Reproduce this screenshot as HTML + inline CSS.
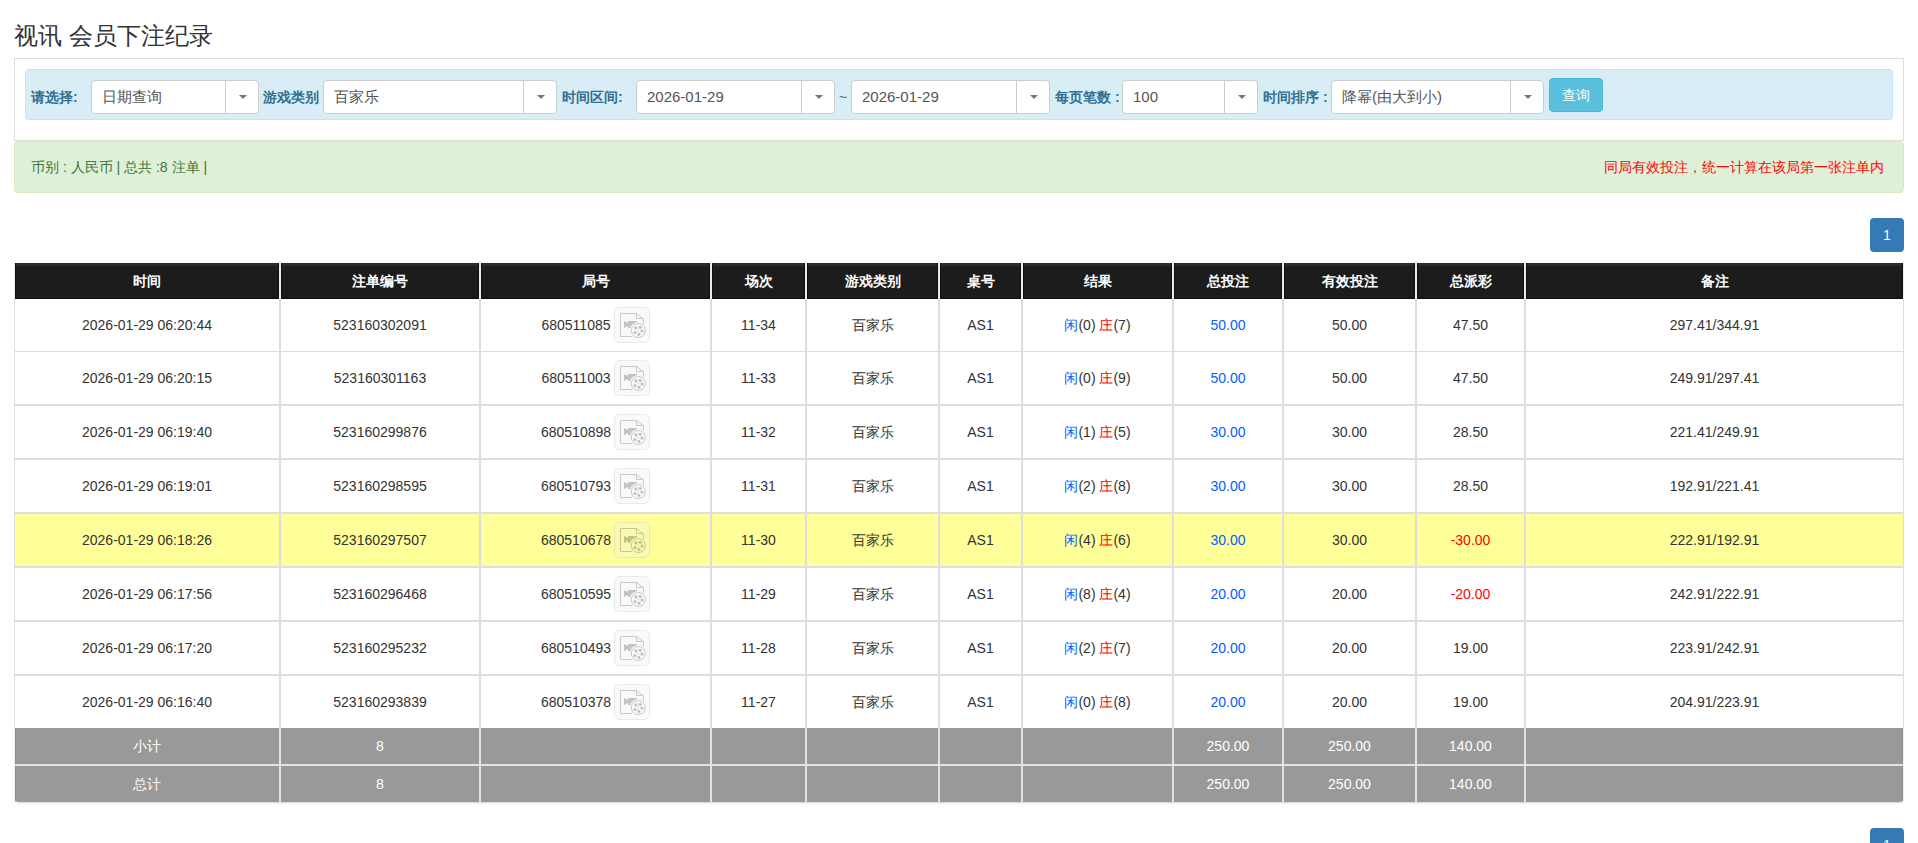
<!DOCTYPE html>
<html><head><meta charset="utf-8"><title>视讯 会员下注纪录</title>
<style>
*{box-sizing:border-box}
html,body{margin:0;padding:0;background:#fff;width:1918px;height:843px;overflow:hidden}
body{font-family:"Liberation Sans",sans-serif;color:#333;font-size:14px;position:relative}
.abs{position:absolute}
h3{position:absolute;left:14px;top:21px;margin:0;font-size:24px;font-weight:normal;line-height:30px;color:#333;white-space:nowrap}
.panel{position:absolute;left:14px;top:58px;width:1890px;height:83px;border:1px solid #ddd;background:#fff}
.info{position:absolute;left:25px;top:69px;width:1868px;height:51px;background:#d9edf7;border:1px solid #bce8f1;border-radius:4px}
.lbl{position:absolute;top:89px;line-height:16px;font-size:14px;font-weight:bold;color:#31708f;white-space:nowrap}
.sel{position:absolute;top:80px;height:34px;border:1px solid #ccc;border-radius:4px;background:#fff}
.sel .t{position:absolute;left:10px;top:0;line-height:32px;font-size:15px;color:#555;white-space:nowrap}
.sel .d{position:absolute;top:0;bottom:0;border-left:1px solid #ccc}
.sel .caret{position:absolute;top:14px;width:0;height:0;border-left:4px solid transparent;border-right:4px solid transparent;border-top:4px solid #777}
.btn{position:absolute;left:1549px;top:78px;width:54px;height:34px;background:#5bc0de;border:1px solid #46b8da;border-radius:4px;color:#fff;font-size:14px;line-height:32px;text-align:center}
.succ{position:absolute;left:14px;top:141px;width:1890px;height:52px;background:#dff0d8;border:1px solid #d6e9c6;border-radius:4px}
.succ .l{position:absolute;left:16px;top:17px;line-height:16px;color:#3c763d;font-size:14px;white-space:nowrap}
.succ .r{position:absolute;right:19px;top:17px;line-height:16px;color:#ff0000;font-size:14px;white-space:nowrap}
.pg{position:absolute;left:1870px;width:34px;height:34px;background:#337ab7;border-radius:4px;color:#fff;font-size:14px;line-height:34px;text-align:center}
.row{position:absolute;left:14px;width:1890px;display:flex}
.c{flex:none;border-left:1px solid #ddd;border-right:1px solid #ddd;display:flex;align-items:center;justify-content:center;line-height:16px;white-space:nowrap;font-size:14px}
.hd .c{background:linear-gradient(#2c2c2c 0,#2c2c2c 2px,#1c1c1c 4px,#1c1c1c 100%);border-left:1px solid #ebebeb;border-right:1px solid #ebebeb;color:#fff;font-weight:bold;box-shadow:inset 1px 0 0 #101010,inset -1px 0 0 #101010,inset 0 -1px 0 #0c0c0c}
.bd{background:#fff}
.bd.y{background:#ffff99}
.ft{background:#999}
.ft .c{color:#fff;border-left:1px solid #e2e2e2;border-right:1px solid #e2e2e2}
.ft .c:first-child{border-left:1px solid #f0f0f0;box-shadow:inset 1px 0 0 #8f8f8f}
.ft .c:last-child{border-right:1px solid #f0f0f0;box-shadow:inset -1px 0 0 #8f8f8f}
.jf{display:inline-flex;align-items:center}
.z{display:inline-block;white-space:nowrap;text-align:justify;text-align-last:justify}
.blue{color:#0060ff}
.red{color:#ff0000}
.vb{display:inline-block;vertical-align:middle;width:36px;height:36px;margin-left:3px;border:1px solid #c4c4c4;border-radius:5px;background:#eee;position:relative;opacity:.35}
.vb svg{position:absolute;left:0;top:0}
</style></head><body>
<h3><span class="z" style="width:2em">视讯</span> <span class="z" style="width:6em">会员下注纪录</span></h3>
<div class="panel"></div>
<div class="info"></div>

<div class="lbl" style="left:31px"><span class="z" style="width:3em">请选择</span>:</div>
<div class="lbl" style="left:263px"><span class="z" style="width:4em">游戏类别</span></div>
<div class="lbl" style="left:562px"><span class="z" style="width:4em">时间区间</span>:</div>
<div class="lbl" style="left:1055px"><span class="z" style="width:4em">每页笔数</span> :</div>
<div class="lbl" style="left:1263px"><span class="z" style="width:4em">时间排序</span> :</div>
<div class="lbl" style="left:839px;font-weight:normal">~</div>
<div class="sel" style="left:91px;width:168px"><div class="t"><span class="z" style="width:4em">日期查询</span></div><div class="d" style="left:133px"></div><div class="caret" style="left:147px"></div></div>
<div class="sel" style="left:323px;width:234px"><div class="t"><span class="z" style="width:3em">百家乐</span></div><div class="d" style="left:199px"></div><div class="caret" style="left:213px"></div></div>
<div class="sel" style="left:636px;width:199px"><div class="t">2026-01-29</div><div class="d" style="left:164px"></div><div class="caret" style="left:178px"></div></div>
<div class="sel" style="left:851px;width:199px"><div class="t">2026-01-29</div><div class="d" style="left:164px"></div><div class="caret" style="left:178px"></div></div>
<div class="sel" style="left:1122px;width:136px"><div class="t">100</div><div class="d" style="left:101px"></div><div class="caret" style="left:115px"></div></div>
<div class="sel" style="left:1331px;width:213px"><div class="t"><span class="z" style="width:2em">降幂</span>(<span class="z" style="width:4em">由大到小</span>)</div><div class="d" style="left:178px"></div><div class="caret" style="left:192px"></div></div>
<div class="btn"><span class="z" style="width:2em">查询</span></div>
<div class="succ"><div class="l"><span class="z" style="width:2em">币别</span> : <span class="z" style="width:3em">人民币</span> | <span class="z" style="width:2em">总共</span> :8 <span class="z" style="width:2em">注单</span> |</div><div class="r"><span class="z" style="width:20em">同局有效投注，统一计算在该局第一张注单内</span></div></div>
<div class="pg" style="top:218px">1</div>
<div class="row hd" style="top:263px;height:36px"><div class="c" style="width:266px"><span class="z" style="width:2em">时间</span></div><div class="c" style="width:200px"><span class="z" style="width:4em">注单编号</span></div><div class="c" style="width:231px"><span class="z" style="width:2em">局号</span></div><div class="c" style="width:95px"><span class="z" style="width:2em">场次</span></div><div class="c" style="width:133px"><span class="z" style="width:4em">游戏类别</span></div><div class="c" style="width:83px"><span class="z" style="width:2em">桌号</span></div><div class="c" style="width:151px"><span class="z" style="width:2em">结果</span></div><div class="c" style="width:110px"><span class="z" style="width:3em">总投注</span></div><div class="c" style="width:133px"><span class="z" style="width:4em">有效投注</span></div><div class="c" style="width:109px"><span class="z" style="width:3em">总派彩</span></div><div class="c" style="width:379px"><span class="z" style="width:2em">备注</span></div></div>
<div class="row bd" style="top:299px;height:53px"><div class="c" style="width:266px;border-bottom:1px solid #ddd"><span>2026-01-29 06:20:44</span></div><div class="c" style="width:200px;border-bottom:1px solid #ddd"><span>523160302091</span></div><div class="c" style="width:231px;border-bottom:1px solid #ddd"><span><span class="jf">680511085<span class="vb"><svg width="34" height="34" viewBox="0 0 34 34"><path d="M5.5 5.5H21.5L28.5 11V28.5H5.5Z" fill="none" stroke="#666"/><path d="M21.5 5.5V10.5H28.5" fill="none" stroke="#666"/><path d="M9 13L13 15V13H22V20H13V18L9 20Z" fill="#565656"/><circle cx="23.3" cy="22.5" r="8.6" fill="#eee"/><circle cx="23.3" cy="22.5" r="7" fill="#eee" stroke="#666"/><circle cx="20.9" cy="19.9" r="1.6" fill="#565656"/><circle cx="25.2" cy="19.3" r="1.6" fill="#565656"/><circle cx="27" cy="23" r="1.6" fill="#565656"/><circle cx="23.9" cy="26.4" r="1.6" fill="#565656"/><circle cx="20" cy="24.6" r="1.6" fill="#565656"/><circle cx="23.2" cy="22.6" r=".6" fill="#565656"/></svg>
</span></span></span></div><div class="c" style="width:95px;border-bottom:1px solid #ddd"><span>11-34</span></div><div class="c" style="width:133px;border-bottom:1px solid #ddd"><span><span class="z" style="width:3em">百家乐</span></span></div><div class="c" style="width:83px;border-bottom:1px solid #ddd"><span>AS1</span></div><div class="c" style="width:151px;border-bottom:1px solid #ddd"><span><span class="blue"><span class="z" style="width:1em">闲</span></span>(0) <span class="red"><span class="z" style="width:1em">庄</span></span>(7)</span></div><div class="c" style="width:110px;border-bottom:1px solid #ddd"><span><span class="blue">50.00</span></span></div><div class="c" style="width:133px;border-bottom:1px solid #ddd"><span>50.00</span></div><div class="c" style="width:109px;border-bottom:1px solid #ddd"><span>47.50</span></div><div class="c" style="width:379px;border-bottom:1px solid #ddd"><span>297.41/344.91</span></div></div>
<div class="row bd" style="top:352px;height:54px"><div class="c" style="width:266px;border-bottom:2px solid #ddd"><span>2026-01-29 06:20:15</span></div><div class="c" style="width:200px;border-bottom:2px solid #ddd"><span>523160301163</span></div><div class="c" style="width:231px;border-bottom:2px solid #ddd"><span><span class="jf">680511003<span class="vb"><svg width="34" height="34" viewBox="0 0 34 34"><path d="M5.5 5.5H21.5L28.5 11V28.5H5.5Z" fill="none" stroke="#666"/><path d="M21.5 5.5V10.5H28.5" fill="none" stroke="#666"/><path d="M9 13L13 15V13H22V20H13V18L9 20Z" fill="#565656"/><circle cx="23.3" cy="22.5" r="8.6" fill="#eee"/><circle cx="23.3" cy="22.5" r="7" fill="#eee" stroke="#666"/><circle cx="20.9" cy="19.9" r="1.6" fill="#565656"/><circle cx="25.2" cy="19.3" r="1.6" fill="#565656"/><circle cx="27" cy="23" r="1.6" fill="#565656"/><circle cx="23.9" cy="26.4" r="1.6" fill="#565656"/><circle cx="20" cy="24.6" r="1.6" fill="#565656"/><circle cx="23.2" cy="22.6" r=".6" fill="#565656"/></svg>
</span></span></span></div><div class="c" style="width:95px;border-bottom:2px solid #ddd"><span>11-33</span></div><div class="c" style="width:133px;border-bottom:2px solid #ddd"><span><span class="z" style="width:3em">百家乐</span></span></div><div class="c" style="width:83px;border-bottom:2px solid #ddd"><span>AS1</span></div><div class="c" style="width:151px;border-bottom:2px solid #ddd"><span><span class="blue"><span class="z" style="width:1em">闲</span></span>(0) <span class="red"><span class="z" style="width:1em">庄</span></span>(9)</span></div><div class="c" style="width:110px;border-bottom:2px solid #ddd"><span><span class="blue">50.00</span></span></div><div class="c" style="width:133px;border-bottom:2px solid #ddd"><span>50.00</span></div><div class="c" style="width:109px;border-bottom:2px solid #ddd"><span>47.50</span></div><div class="c" style="width:379px;border-bottom:2px solid #ddd"><span>249.91/297.41</span></div></div>
<div class="row bd" style="top:406px;height:54px"><div class="c" style="width:266px;border-bottom:2px solid #ddd"><span>2026-01-29 06:19:40</span></div><div class="c" style="width:200px;border-bottom:2px solid #ddd"><span>523160299876</span></div><div class="c" style="width:231px;border-bottom:2px solid #ddd"><span><span class="jf">680510898<span class="vb"><svg width="34" height="34" viewBox="0 0 34 34"><path d="M5.5 5.5H21.5L28.5 11V28.5H5.5Z" fill="none" stroke="#666"/><path d="M21.5 5.5V10.5H28.5" fill="none" stroke="#666"/><path d="M9 13L13 15V13H22V20H13V18L9 20Z" fill="#565656"/><circle cx="23.3" cy="22.5" r="8.6" fill="#eee"/><circle cx="23.3" cy="22.5" r="7" fill="#eee" stroke="#666"/><circle cx="20.9" cy="19.9" r="1.6" fill="#565656"/><circle cx="25.2" cy="19.3" r="1.6" fill="#565656"/><circle cx="27" cy="23" r="1.6" fill="#565656"/><circle cx="23.9" cy="26.4" r="1.6" fill="#565656"/><circle cx="20" cy="24.6" r="1.6" fill="#565656"/><circle cx="23.2" cy="22.6" r=".6" fill="#565656"/></svg>
</span></span></span></div><div class="c" style="width:95px;border-bottom:2px solid #ddd"><span>11-32</span></div><div class="c" style="width:133px;border-bottom:2px solid #ddd"><span><span class="z" style="width:3em">百家乐</span></span></div><div class="c" style="width:83px;border-bottom:2px solid #ddd"><span>AS1</span></div><div class="c" style="width:151px;border-bottom:2px solid #ddd"><span><span class="blue"><span class="z" style="width:1em">闲</span></span>(1) <span class="red"><span class="z" style="width:1em">庄</span></span>(5)</span></div><div class="c" style="width:110px;border-bottom:2px solid #ddd"><span><span class="blue">30.00</span></span></div><div class="c" style="width:133px;border-bottom:2px solid #ddd"><span>30.00</span></div><div class="c" style="width:109px;border-bottom:2px solid #ddd"><span>28.50</span></div><div class="c" style="width:379px;border-bottom:2px solid #ddd"><span>221.41/249.91</span></div></div>
<div class="row bd" style="top:460px;height:54px"><div class="c" style="width:266px;border-bottom:2px solid #ddd"><span>2026-01-29 06:19:01</span></div><div class="c" style="width:200px;border-bottom:2px solid #ddd"><span>523160298595</span></div><div class="c" style="width:231px;border-bottom:2px solid #ddd"><span><span class="jf">680510793<span class="vb"><svg width="34" height="34" viewBox="0 0 34 34"><path d="M5.5 5.5H21.5L28.5 11V28.5H5.5Z" fill="none" stroke="#666"/><path d="M21.5 5.5V10.5H28.5" fill="none" stroke="#666"/><path d="M9 13L13 15V13H22V20H13V18L9 20Z" fill="#565656"/><circle cx="23.3" cy="22.5" r="8.6" fill="#eee"/><circle cx="23.3" cy="22.5" r="7" fill="#eee" stroke="#666"/><circle cx="20.9" cy="19.9" r="1.6" fill="#565656"/><circle cx="25.2" cy="19.3" r="1.6" fill="#565656"/><circle cx="27" cy="23" r="1.6" fill="#565656"/><circle cx="23.9" cy="26.4" r="1.6" fill="#565656"/><circle cx="20" cy="24.6" r="1.6" fill="#565656"/><circle cx="23.2" cy="22.6" r=".6" fill="#565656"/></svg>
</span></span></span></div><div class="c" style="width:95px;border-bottom:2px solid #ddd"><span>11-31</span></div><div class="c" style="width:133px;border-bottom:2px solid #ddd"><span><span class="z" style="width:3em">百家乐</span></span></div><div class="c" style="width:83px;border-bottom:2px solid #ddd"><span>AS1</span></div><div class="c" style="width:151px;border-bottom:2px solid #ddd"><span><span class="blue"><span class="z" style="width:1em">闲</span></span>(2) <span class="red"><span class="z" style="width:1em">庄</span></span>(8)</span></div><div class="c" style="width:110px;border-bottom:2px solid #ddd"><span><span class="blue">30.00</span></span></div><div class="c" style="width:133px;border-bottom:2px solid #ddd"><span>30.00</span></div><div class="c" style="width:109px;border-bottom:2px solid #ddd"><span>28.50</span></div><div class="c" style="width:379px;border-bottom:2px solid #ddd"><span>192.91/221.41</span></div></div>
<div class="row bd y" style="top:514px;height:54px"><div class="c" style="width:266px;border-bottom:2px solid #ddd"><span>2026-01-29 06:18:26</span></div><div class="c" style="width:200px;border-bottom:2px solid #ddd"><span>523160297507</span></div><div class="c" style="width:231px;border-bottom:2px solid #ddd"><span><span class="jf">680510678<span class="vb"><svg width="34" height="34" viewBox="0 0 34 34"><path d="M5.5 5.5H21.5L28.5 11V28.5H5.5Z" fill="none" stroke="#666"/><path d="M21.5 5.5V10.5H28.5" fill="none" stroke="#666"/><path d="M9 13L13 15V13H22V20H13V18L9 20Z" fill="#565656"/><circle cx="23.3" cy="22.5" r="8.6" fill="#eee"/><circle cx="23.3" cy="22.5" r="7" fill="#eee" stroke="#666"/><circle cx="20.9" cy="19.9" r="1.6" fill="#565656"/><circle cx="25.2" cy="19.3" r="1.6" fill="#565656"/><circle cx="27" cy="23" r="1.6" fill="#565656"/><circle cx="23.9" cy="26.4" r="1.6" fill="#565656"/><circle cx="20" cy="24.6" r="1.6" fill="#565656"/><circle cx="23.2" cy="22.6" r=".6" fill="#565656"/></svg>
</span></span></span></div><div class="c" style="width:95px;border-bottom:2px solid #ddd"><span>11-30</span></div><div class="c" style="width:133px;border-bottom:2px solid #ddd"><span><span class="z" style="width:3em">百家乐</span></span></div><div class="c" style="width:83px;border-bottom:2px solid #ddd"><span>AS1</span></div><div class="c" style="width:151px;border-bottom:2px solid #ddd"><span><span class="blue"><span class="z" style="width:1em">闲</span></span>(4) <span class="red"><span class="z" style="width:1em">庄</span></span>(6)</span></div><div class="c" style="width:110px;border-bottom:2px solid #ddd"><span><span class="blue">30.00</span></span></div><div class="c" style="width:133px;border-bottom:2px solid #ddd"><span>30.00</span></div><div class="c" style="width:109px;border-bottom:2px solid #ddd"><span><span class="red">-30.00</span></span></div><div class="c" style="width:379px;border-bottom:2px solid #ddd"><span>222.91/192.91</span></div></div>
<div class="row bd" style="top:568px;height:54px"><div class="c" style="width:266px;border-bottom:2px solid #ddd"><span>2026-01-29 06:17:56</span></div><div class="c" style="width:200px;border-bottom:2px solid #ddd"><span>523160296468</span></div><div class="c" style="width:231px;border-bottom:2px solid #ddd"><span><span class="jf">680510595<span class="vb"><svg width="34" height="34" viewBox="0 0 34 34"><path d="M5.5 5.5H21.5L28.5 11V28.5H5.5Z" fill="none" stroke="#666"/><path d="M21.5 5.5V10.5H28.5" fill="none" stroke="#666"/><path d="M9 13L13 15V13H22V20H13V18L9 20Z" fill="#565656"/><circle cx="23.3" cy="22.5" r="8.6" fill="#eee"/><circle cx="23.3" cy="22.5" r="7" fill="#eee" stroke="#666"/><circle cx="20.9" cy="19.9" r="1.6" fill="#565656"/><circle cx="25.2" cy="19.3" r="1.6" fill="#565656"/><circle cx="27" cy="23" r="1.6" fill="#565656"/><circle cx="23.9" cy="26.4" r="1.6" fill="#565656"/><circle cx="20" cy="24.6" r="1.6" fill="#565656"/><circle cx="23.2" cy="22.6" r=".6" fill="#565656"/></svg>
</span></span></span></div><div class="c" style="width:95px;border-bottom:2px solid #ddd"><span>11-29</span></div><div class="c" style="width:133px;border-bottom:2px solid #ddd"><span><span class="z" style="width:3em">百家乐</span></span></div><div class="c" style="width:83px;border-bottom:2px solid #ddd"><span>AS1</span></div><div class="c" style="width:151px;border-bottom:2px solid #ddd"><span><span class="blue"><span class="z" style="width:1em">闲</span></span>(8) <span class="red"><span class="z" style="width:1em">庄</span></span>(4)</span></div><div class="c" style="width:110px;border-bottom:2px solid #ddd"><span><span class="blue">20.00</span></span></div><div class="c" style="width:133px;border-bottom:2px solid #ddd"><span>20.00</span></div><div class="c" style="width:109px;border-bottom:2px solid #ddd"><span><span class="red">-20.00</span></span></div><div class="c" style="width:379px;border-bottom:2px solid #ddd"><span>242.91/222.91</span></div></div>
<div class="row bd" style="top:622px;height:54px"><div class="c" style="width:266px;border-bottom:2px solid #ddd"><span>2026-01-29 06:17:20</span></div><div class="c" style="width:200px;border-bottom:2px solid #ddd"><span>523160295232</span></div><div class="c" style="width:231px;border-bottom:2px solid #ddd"><span><span class="jf">680510493<span class="vb"><svg width="34" height="34" viewBox="0 0 34 34"><path d="M5.5 5.5H21.5L28.5 11V28.5H5.5Z" fill="none" stroke="#666"/><path d="M21.5 5.5V10.5H28.5" fill="none" stroke="#666"/><path d="M9 13L13 15V13H22V20H13V18L9 20Z" fill="#565656"/><circle cx="23.3" cy="22.5" r="8.6" fill="#eee"/><circle cx="23.3" cy="22.5" r="7" fill="#eee" stroke="#666"/><circle cx="20.9" cy="19.9" r="1.6" fill="#565656"/><circle cx="25.2" cy="19.3" r="1.6" fill="#565656"/><circle cx="27" cy="23" r="1.6" fill="#565656"/><circle cx="23.9" cy="26.4" r="1.6" fill="#565656"/><circle cx="20" cy="24.6" r="1.6" fill="#565656"/><circle cx="23.2" cy="22.6" r=".6" fill="#565656"/></svg>
</span></span></span></div><div class="c" style="width:95px;border-bottom:2px solid #ddd"><span>11-28</span></div><div class="c" style="width:133px;border-bottom:2px solid #ddd"><span><span class="z" style="width:3em">百家乐</span></span></div><div class="c" style="width:83px;border-bottom:2px solid #ddd"><span>AS1</span></div><div class="c" style="width:151px;border-bottom:2px solid #ddd"><span><span class="blue"><span class="z" style="width:1em">闲</span></span>(2) <span class="red"><span class="z" style="width:1em">庄</span></span>(7)</span></div><div class="c" style="width:110px;border-bottom:2px solid #ddd"><span><span class="blue">20.00</span></span></div><div class="c" style="width:133px;border-bottom:2px solid #ddd"><span>20.00</span></div><div class="c" style="width:109px;border-bottom:2px solid #ddd"><span>19.00</span></div><div class="c" style="width:379px;border-bottom:2px solid #ddd"><span>223.91/242.91</span></div></div>
<div class="row bd" style="top:676px;height:52px"><div class="c" style="width:266px;"><span>2026-01-29 06:16:40</span></div><div class="c" style="width:200px;"><span>523160293839</span></div><div class="c" style="width:231px;"><span><span class="jf">680510378<span class="vb"><svg width="34" height="34" viewBox="0 0 34 34"><path d="M5.5 5.5H21.5L28.5 11V28.5H5.5Z" fill="none" stroke="#666"/><path d="M21.5 5.5V10.5H28.5" fill="none" stroke="#666"/><path d="M9 13L13 15V13H22V20H13V18L9 20Z" fill="#565656"/><circle cx="23.3" cy="22.5" r="8.6" fill="#eee"/><circle cx="23.3" cy="22.5" r="7" fill="#eee" stroke="#666"/><circle cx="20.9" cy="19.9" r="1.6" fill="#565656"/><circle cx="25.2" cy="19.3" r="1.6" fill="#565656"/><circle cx="27" cy="23" r="1.6" fill="#565656"/><circle cx="23.9" cy="26.4" r="1.6" fill="#565656"/><circle cx="20" cy="24.6" r="1.6" fill="#565656"/><circle cx="23.2" cy="22.6" r=".6" fill="#565656"/></svg>
</span></span></span></div><div class="c" style="width:95px;"><span>11-27</span></div><div class="c" style="width:133px;"><span><span class="z" style="width:3em">百家乐</span></span></div><div class="c" style="width:83px;"><span>AS1</span></div><div class="c" style="width:151px;"><span><span class="blue"><span class="z" style="width:1em">闲</span></span>(0) <span class="red"><span class="z" style="width:1em">庄</span></span>(8)</span></div><div class="c" style="width:110px;"><span><span class="blue">20.00</span></span></div><div class="c" style="width:133px;"><span>20.00</span></div><div class="c" style="width:109px;"><span>19.00</span></div><div class="c" style="width:379px;"><span>204.91/223.91</span></div></div>
<div class="abs" style="left:15px;top:728px;width:1888px;height:74px;border-radius:0 0 4px 4px;box-shadow:0 1px 2px rgba(0,0,0,.18);background:#999"></div>
<div class="row ft" style="top:728px;height:38px"><div class="c" style="width:266px;border-bottom:2px solid #e2e2e2"><span class="z" style="width:2em">小计</span></div><div class="c" style="width:200px;border-bottom:2px solid #e2e2e2">8</div><div class="c" style="width:231px;border-bottom:2px solid #e2e2e2"></div><div class="c" style="width:95px;border-bottom:2px solid #e2e2e2"></div><div class="c" style="width:133px;border-bottom:2px solid #e2e2e2"></div><div class="c" style="width:83px;border-bottom:2px solid #e2e2e2"></div><div class="c" style="width:151px;border-bottom:2px solid #e2e2e2"></div><div class="c" style="width:110px;border-bottom:2px solid #e2e2e2">250.00</div><div class="c" style="width:133px;border-bottom:2px solid #e2e2e2">250.00</div><div class="c" style="width:109px;border-bottom:2px solid #e2e2e2">140.00</div><div class="c" style="width:379px;border-bottom:2px solid #e2e2e2"></div></div>
<div class="row ft" style="top:766px;height:36px;border-radius:0 0 4px 4px;overflow:hidden;background:transparent"><div class="c" style="width:266px"><span class="z" style="width:2em">总计</span></div><div class="c" style="width:200px">8</div><div class="c" style="width:231px"></div><div class="c" style="width:95px"></div><div class="c" style="width:133px"></div><div class="c" style="width:83px"></div><div class="c" style="width:151px"></div><div class="c" style="width:110px">250.00</div><div class="c" style="width:133px">250.00</div><div class="c" style="width:109px">140.00</div><div class="c" style="width:379px"></div></div>
<div class="pg" style="top:828px">1</div>
</body></html>
